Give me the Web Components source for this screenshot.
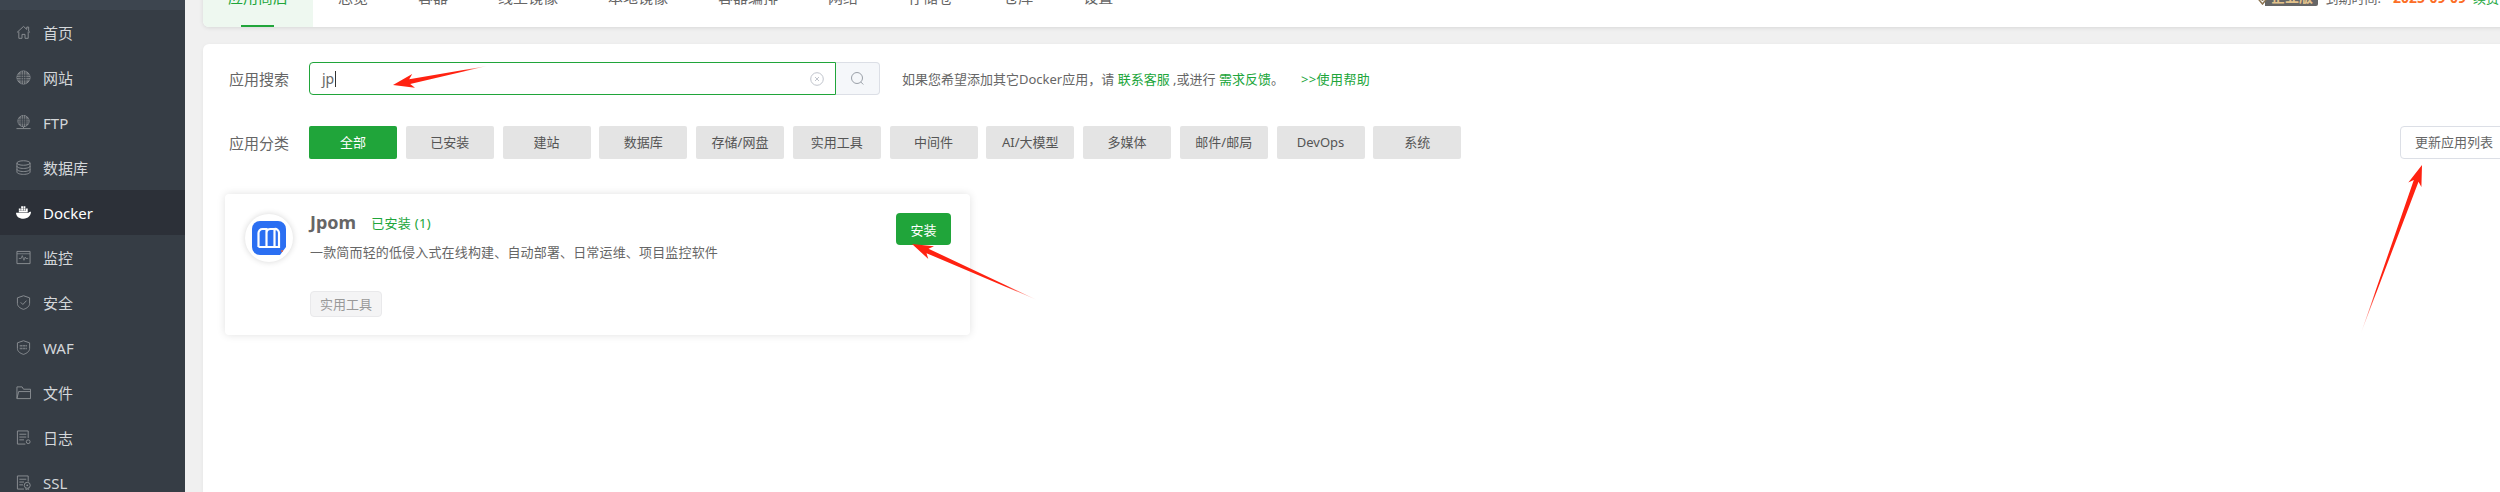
<!DOCTYPE html>
<html lang="zh-CN">
<head>
<meta charset="utf-8">
<title>Docker 应用商店</title>
<style>
  html, body { margin: 0; height: 100%; overflow: hidden; background: #f0f0f0; }
  body { font-family: "Noto Sans", "Noto Sans CJK SC", sans-serif; color: #666; }
</style>
</head>
<body>
<app-shell>
  <side-bar slot="side">
    <nav-item icon="home">首页</nav-item>
    <nav-item icon="globe">网站</nav-item>
    <nav-item icon="ftp">FTP</nav-item>
    <nav-item icon="db">数据库</nav-item>
    <nav-item icon="docker" active>Docker</nav-item>
    <nav-item icon="monitor">监控</nav-item>
    <nav-item icon="shield">安全</nav-item>
    <nav-item icon="waf">WAF</nav-item>
    <nav-item icon="folder">文件</nav-item>
    <nav-item icon="log">日志</nav-item>
    <nav-item icon="ssl">SSL</nav-item>
  </side-bar>

  <tab-bar>
    <tab-item active>应用商店</tab-item>
    <tab-item>总览</tab-item>
    <tab-item>容器</tab-item>
    <tab-item>线上镜像</tab-item>
    <tab-item>本地镜像</tab-item>
    <tab-item>容器编排</tab-item>
    <tab-item>网络</tab-item>
    <tab-item>存储卷</tab-item>
    <tab-item>仓库</tab-item>
    <tab-item>设置</tab-item>
    <license-info slot="right"></license-info>
  </tab-bar>

  <store-panel>
    <search-row></search-row>
    <category-row>
      <cat-button active>全部</cat-button>
      <cat-button>已安装</cat-button>
      <cat-button>建站</cat-button>
      <cat-button>数据库</cat-button>
      <cat-button>存储/网盘</cat-button>
      <cat-button>实用工具</cat-button>
      <cat-button>中间件</cat-button>
      <cat-button>AI/大模型</cat-button>
      <cat-button>多媒体</cat-button>
      <cat-button>邮件/邮局</cat-button>
      <cat-button>DevOps</cat-button>
      <cat-button>系统</cat-button>
    </category-row>
    <app-card name="Jpom" installed="已安装 (1)" tag="实用工具">一款简而轻的低侵入式在线构建、自动部署、日常运维、项目监控软件</app-card>
  </store-panel>

  <annot-arrow from="487,66" to="393,85"></annot-arrow>
  <annot-arrow from="1037,300" to="912,244"></annot-arrow>
  <annot-arrow from="2361,333" to="2422,165"></annot-arrow>
</app-shell>

<script>
// sidebar icons, 16x16 box
const ICONS = {
  home: '<path d="M1 8 8 1.5l3.5 3.2V2.2h2v4.400L15 8M3 7v7.200h3.400V10h3.200v4.200H13V7" fill="none" stroke="currentColor"/>',
  globe: '<circle cx="8" cy="8" r="7" fill="#74787c" stroke="currentColor"/><path d="M1 5.500h14M1 8h14M1 10.500h14M5.500 1.300v13.400M8 1v14M10.500 1.300v13.400" stroke="#363d45" stroke-width=".8" fill="none"/>',
  ftp: '<circle cx="8" cy="6.500" r="6" fill="#74787c" stroke="currentColor"/><path d="M2 4.500h12M2 6.500h12M2 8.500h12M5.700 1v11M8 .5v12M10.300 1v11" stroke="#363d45" stroke-width=".8" fill="none"/><path d="M8 12.500V14M.5 14.500h15" stroke="currentColor" fill="none"/>',
  db: '<ellipse cx="8" cy="3.200" rx="7" ry="2.400" fill="none" stroke="currentColor"/><path d="M1 3.200v9.600C1 14.200 4 15.300 8 15.300s7-1.100 7-2.500V3.200M1 6.500C1 7.900 4 9 8 9s7-1.100 7-2.500M1 9.800c0 1.400 3 2.500 7 2.500s7-1.100 7-2.500" fill="none" stroke="currentColor"/>',
  docker: '<path fill="#fff" d="M0 8.200h13.400c.5-.8 1.300-1.200 2.600-1 0 3.700-3 7.400-8 7.400S.2 12.300 0 8.200zM3 3.800h2v2H3zM5.500 3.800h2v2h-2zM8 3.800h2v2H8zM10.500 3.800h2v3.600h-2zM3 6.200h9.200v1.400H3zM5.500 1.400h2v2h-2zM8 1.400h2v2H8z"/>',
  monitor: '<path d="M1 1.500h14v13H1z" fill="none" stroke="currentColor"/><path d="M3 9h2.500l1.200-3 1.800 5 1.300-3.500.8 1.500H13M1 4h14" fill="none" stroke="currentColor" stroke-width=".8"/>',
  shield: '<path d="M8 .8 14.500 3v6c0 3.200-3 5.300-6.500 6.300C4.500 14.300 1.500 12.200 1.500 9V3z" fill="none" stroke="currentColor"/><path d="m5 7.800 2.300 2.300L11.200 6" fill="none" stroke="currentColor"/>',
  waf: '<path d="M8 .8 14.500 3v6c0 3.200-3 5.300-6.500 6.300C4.500 14.300 1.500 12.200 1.500 9V3z" fill="none" stroke="currentColor"/><path d="M4 6.200h8M4 9h8" stroke="currentColor" stroke-width="1.600" stroke-dasharray="1 .6" fill="none"/>',
  folder: '<path d="M1 14.500V2h5.500L8 4.500h7.500v10zM1 14.500 2.800 7h12.700" fill="none" stroke="currentColor"/>',
  log: '<path d="M13 8.500V1H1.500v14H10M3.500 4.500H11M3.500 7.500H11M3.500 10.500h5" fill="none" stroke="currentColor"/><circle cx="13" cy="12.500" r="2" fill="none" stroke="currentColor"/>',
  ssl: '<path d="M13 7V1H1.500v14h7M3.500 4.500H11M3.500 7.500h5M3.500 10.500h4" fill="none" stroke="currentColor"/><circle cx="12" cy="11" r="3.200" fill="none" stroke="currentColor"/><circle cx="12" cy="11" r="1" fill="currentColor"/><path d="M10.500 14v1.700l1.500-.7 1.500.7V14" fill="none" stroke="currentColor" stroke-width=".8"/>'
};

class AppShell extends HTMLElement {
  constructor() {
    super();
    this.attachShadow({ mode: 'open' }).innerHTML = `
      <style>
        :host { display: flex; width: 2520px; height: 492px; position: relative; overflow: hidden; }
        aside { flex: 0 0 185px; }
        main { flex: 1; min-width: 0; padding-left: 18px; display: flex; flex-direction: column; gap: 17px; margin-top: -23px; }
      </style>
      <aside><slot name="side"></slot></aside>
      <main><slot></slot></main>`;
  }
}

class SideBar extends HTMLElement {
  constructor() {
    super();
    this.attachShadow({ mode: 'open' }).innerHTML = `
      <style>
        :host { display: block; height: 492px; overflow: hidden; background: #363d45; }
        .top { height: 10px; background: #3d454f; }
      </style>
      <div class="top"></div>
      <slot></slot>`;
  }
}

class NavItem extends HTMLElement {
  constructor() {
    super();
    const icon = ICONS[this.getAttribute('icon')] || '';
    this.attachShadow({ mode: 'open' }).innerHTML = `
      <style>
        :host { display: flex; align-items: center; height: 45px; padding-left: 16px; gap: 12px; font-size: 15px; color: #d4d7da; }
        :host([active]) { background: #2c3038; color: #fff; }
        svg { width: 15px; height: 15px; color: #8c9094; flex: none; }
      </style>
      <svg viewBox="0 0 16 16">${icon}</svg>
      <span><slot></slot></span>`;
  }
}

class TabBar extends HTMLElement {
  constructor() {
    super();
    this.attachShadow({ mode: 'open' }).innerHTML = `
      <style>
        :host { display: flex; height: 50px; flex: none; background: #fff; border-radius: 6px; box-shadow: 0 1px 4px rgba(0,0,0,.1); overflow: hidden; }
        .right { margin-left: auto; padding-right: 21px; }
      </style>
      <slot></slot>
      <div class="right"><slot name="right"></slot></div>`;
  }
}

class TabItem extends HTMLElement {
  constructor() {
    super();
    this.attachShadow({ mode: 'open' }).innerHTML = `
      <style>
        :host { display: block; position: relative; height: 40px; line-height: 40px; padding: 0 25px 10px; font-size: 15px; color: #666; }
        :host([active]) { background: #eef8f0; color: #20a53a; }
        :host([active])::after { content: ""; position: absolute; left: 38px; bottom: 0; width: 33px; height: 2px; background: #20a53a; }
      </style>
      <slot></slot>`;
  }
}

class LicenseInfo extends HTMLElement {
  constructor() {
    super();
    this.attachShadow({ mode: 'open' }).innerHTML = `
      <style>
        :host { display: flex; align-items: center; height: 40px; font-size: 13px; color: #666; }
        svg { width: 17px; height: 16px; margin-right: -6px; position: relative; z-index: 1; flex: none; }
        .badge { background: #666; color: #e3c38c; font-size: 14px; font-weight: 700; width: 53px; height: 18px; line-height: 18px; text-align: center; border-radius: 0 2px 2px 0; }
        .exp { margin: 0 12px 0 7px; }
        .date { color: #fc6d26; font-weight: 700; font-size: 14px; margin-right: 7px; }
        .renew { color: #20a53a; }
      </style>
      <svg viewBox="0 0 17 16"><path d="M8.500 15 1 6l3-5h9l3 5z" fill="#fff" stroke="#8a7350" stroke-width="1.500"/><path d="m4 6 4.500 6L13 6" fill="none" stroke="#8a7350"/></svg>
      <span class="badge">企业版</span>
      <span class="exp">到期时间:</span>
      <span class="date">2025-09-09</span>
      <span class="renew">续费</span>`;
  }
}

class StorePanel extends HTMLElement {
  constructor() {
    super();
    this.attachShadow({ mode: 'open' }).innerHTML = `
      <style>
        :host { display: flex; flex-direction: column; flex: 1; background: #fff; border-radius: 6px 0 0 0; padding: 18px 8px 0 22px; box-shadow: 0 1px 4px rgba(0,0,0,.05); }
      </style>
      <slot></slot>`;
  }
}

class SearchRow extends HTMLElement {
  constructor() {
    super();
    this.attachShadow({ mode: 'open' }).innerHTML = `
      <style>
        :host { display: flex; align-items: center; height: 33px; padding-left: 4px; }
        label { width: 80px; font-size: 15px; color: #666; flex: none; }
        .input { box-sizing: border-box; width: 527px; height: 33px; display: flex; align-items: center; padding: 0 11px 0 12px; border: 1px solid #20a53a; border-radius: 4px 0 0 4px; font-size: 14px; color: #666; }
        .caret { width: 1px; height: 16px; background: #333; margin-left: 1px; }
        .clear { margin-left: auto; width: 14px; height: 14px; }
        .go { box-sizing: border-box; width: 44px; height: 33px; display: flex; align-items: center; justify-content: center; background: #f5f7fa; border: 1px solid #dcdfe6; border-left: 0; border-radius: 0 4px 4px 0; }
        .go svg { width: 15px; height: 15px; }
        p { margin: 0 0 0 22px; font-size: 13px; color: #666; white-space: nowrap; }
        a { color: #20a53a; text-decoration: none; }
        .help { margin-left: 17px; letter-spacing: .4px; }
      </style>
      <label>应用搜索</label>
      <div class="input"><span>jp</span><i class="caret"></i>
        <svg class="clear" viewBox="0 0 14 14"><circle cx="7" cy="7" r="6.300" fill="none" stroke="#c0c4cc"/><path d="m5 5 4 4m0-4-4 4" stroke="#c0c4cc"/></svg>
      </div>
      <div class="go"><svg viewBox="0 0 15 15"><circle cx="7" cy="7" r="5.500" fill="none" stroke="#9aa0a8"/><path d="m10.800 11 2.500 2.500" stroke="#9aa0a8"/></svg></div>
      <p>如果您希望添加其它Docker应用，请 <a>联系客服</a> ,或进行 <a>需求反馈</a>。<a class="help">&gt;&gt;使用帮助</a></p>`;
  }
}

class CategoryRow extends HTMLElement {
  constructor() {
    super();
    this.attachShadow({ mode: 'open' }).innerHTML = `
      <style>
        :host { display: flex; align-items: center; margin-top: 31px; padding-left: 4px; }
        label { width: 80px; font-size: 15px; color: #666; flex: none; }
        .list { display: flex; gap: 8.75px; }
        .update { box-sizing: border-box; margin-left: auto; width: 112px; height: 33px; line-height: 31px; padding-left: 14px; font-size: 13px; color: #666; background: #fff; border: 1px solid #dcdfe6; border-radius: 4px; }
      </style>
      <label>应用分类</label>
      <div class="list"><slot></slot></div>
      <div class="update">更新应用列表</div>`;
  }
}

class CatButton extends HTMLElement {
  constructor() {
    super();
    this.attachShadow({ mode: 'open' }).innerHTML = `
      <style>
        :host { display: block; width: 88px; height: 33px; line-height: 33px; text-align: center; font-size: 13px; color: #555; background: #e4e4e4; border-radius: 2px; }
        :host([active]) { background: #20a53a; color: #fff; }
      </style>
      <slot></slot>`;
  }
}

class AppCard extends HTMLElement {
  constructor() {
    super();
    const name = this.getAttribute('name');
    const installed = this.getAttribute('installed');
    const tag = this.getAttribute('tag');
    this.attachShadow({ mode: 'open' }).innerHTML = `
      <style>
        :host { box-sizing: border-box; display: flex; width: 745px; height: 141px; margin: 35px 0 0 0; padding: 19px; background: #fff; border-radius: 4px; box-shadow: 0 0 8px rgba(0,0,0,.12); }
        .logo { flex: none; width: 48px; height: 48px; margin: 1px 17px 0 1px; border-radius: 50%; background: #fff; box-shadow: 0 0 6px rgba(0,0,0,.16); display: flex; align-items: center; justify-content: center; }
        .logo svg { width: 34px; height: 34px; }
        .body { flex: 1; min-width: 0; }
        .title { display: flex; align-items: center; height: 18px; }
        .name { font-size: 18px; font-weight: 700; color: #666; }
        .state { margin-left: 15px; font-size: 13px; letter-spacing: .3px; color: #20a53a; }
        .desc { margin-top: 11px; line-height: 20px; font-size: 13px; letter-spacing: .16px; color: #666; }
        .tag { display: inline-block; box-sizing: border-box; height: 26px; line-height: 24px; margin-top: 29px; padding: 0 9px; font-size: 13px; color: #999; background: #f4f4f5; border: 1px solid #e9e9eb; border-radius: 4px; }
        button { flex: none; width: 55px; height: 32px; border: 0; padding: 0; border-radius: 4px; background: #20a53a; color: #fff; font: inherit; font-size: 13px; }
      </style>
      <div class="logo">
        <svg viewBox="0 0 34 34">
          <path d="M8 0h18a8 8 0 0 1 8 8v18l-6 8H8a8 8 0 0 1-8-8V8a8 8 0 0 1 8-8z" fill="#2b6ff2"/>
          <path d="M6.500 26V12a4 4 0 0 1 4-4h4v18h-8M14.500 12a4 4 0 0 1 4-4h4v18h-8M22.500 8a4 4 0 0 1 4.500 4v14h-4.500" fill="none" stroke="#fff" stroke-width="2.200"/>
          <circle cx="30" cy="30" r="1" fill="#f0603a"/>
        </svg>
      </div>
      <div class="body">
        <div class="title"><span class="name">${name}</span><span class="state">${installed}</span></div>
        <div class="desc"><slot></slot></div>
        <span class="tag">${tag}</span>
      </div>
      <button>安装</button>`;
  }
}

// red arrows painted over the screenshot
class AnnotArrow extends HTMLElement {
  constructor() {
    super();
    const [x0, y0] = this.getAttribute('from').split(',').map(Number);
    const [x1, y1] = this.getAttribute('to').split(',').map(Number);
    const len = Math.hypot(x1 - x0, y1 - y0);
    const ux = (x1 - x0) / len, uy = (y1 - y0) / len;
    const pt = (back, side) => `${(x1 - ux * back - uy * side).toFixed(1)},${(y1 - uy * back + ux * side).toFixed(1)}`;
    const points = [`${x0},${y0}`, pt(17, 2.5), pt(21, 7), pt(0, 0), pt(21, -7), pt(17, -2.5)].join(' ');
    const id = 'g' + x0;
    this.attachShadow({ mode: 'open' }).innerHTML = `
      <style>
        :host { position: absolute; left: 0; top: 0; width: 2520px; height: 492px; pointer-events: none; }
        svg { display: block; width: 100%; height: 100%; }
      </style>
      <svg viewBox="0 0 2520 492">
        <defs><linearGradient id="${id}" gradientUnits="userSpaceOnUse" x1="${x0}" y1="${y0}" x2="${x1}" y2="${y1}">
          <stop offset="0" stop-color="#ff2211" stop-opacity=".1"/>
          <stop offset=".25" stop-color="#ff2211"/>
        </linearGradient></defs>
        <polygon points="${points}" fill="url(#${id})"/>
      </svg>`;
  }
}

customElements.define('app-shell', AppShell);
customElements.define('side-bar', SideBar);
customElements.define('nav-item', NavItem);
customElements.define('tab-bar', TabBar);
customElements.define('tab-item', TabItem);
customElements.define('license-info', LicenseInfo);
customElements.define('store-panel', StorePanel);
customElements.define('search-row', SearchRow);
customElements.define('category-row', CategoryRow);
customElements.define('cat-button', CatButton);
customElements.define('app-card', AppCard);
customElements.define('annot-arrow', AnnotArrow);
</script>
</body>
</html>
